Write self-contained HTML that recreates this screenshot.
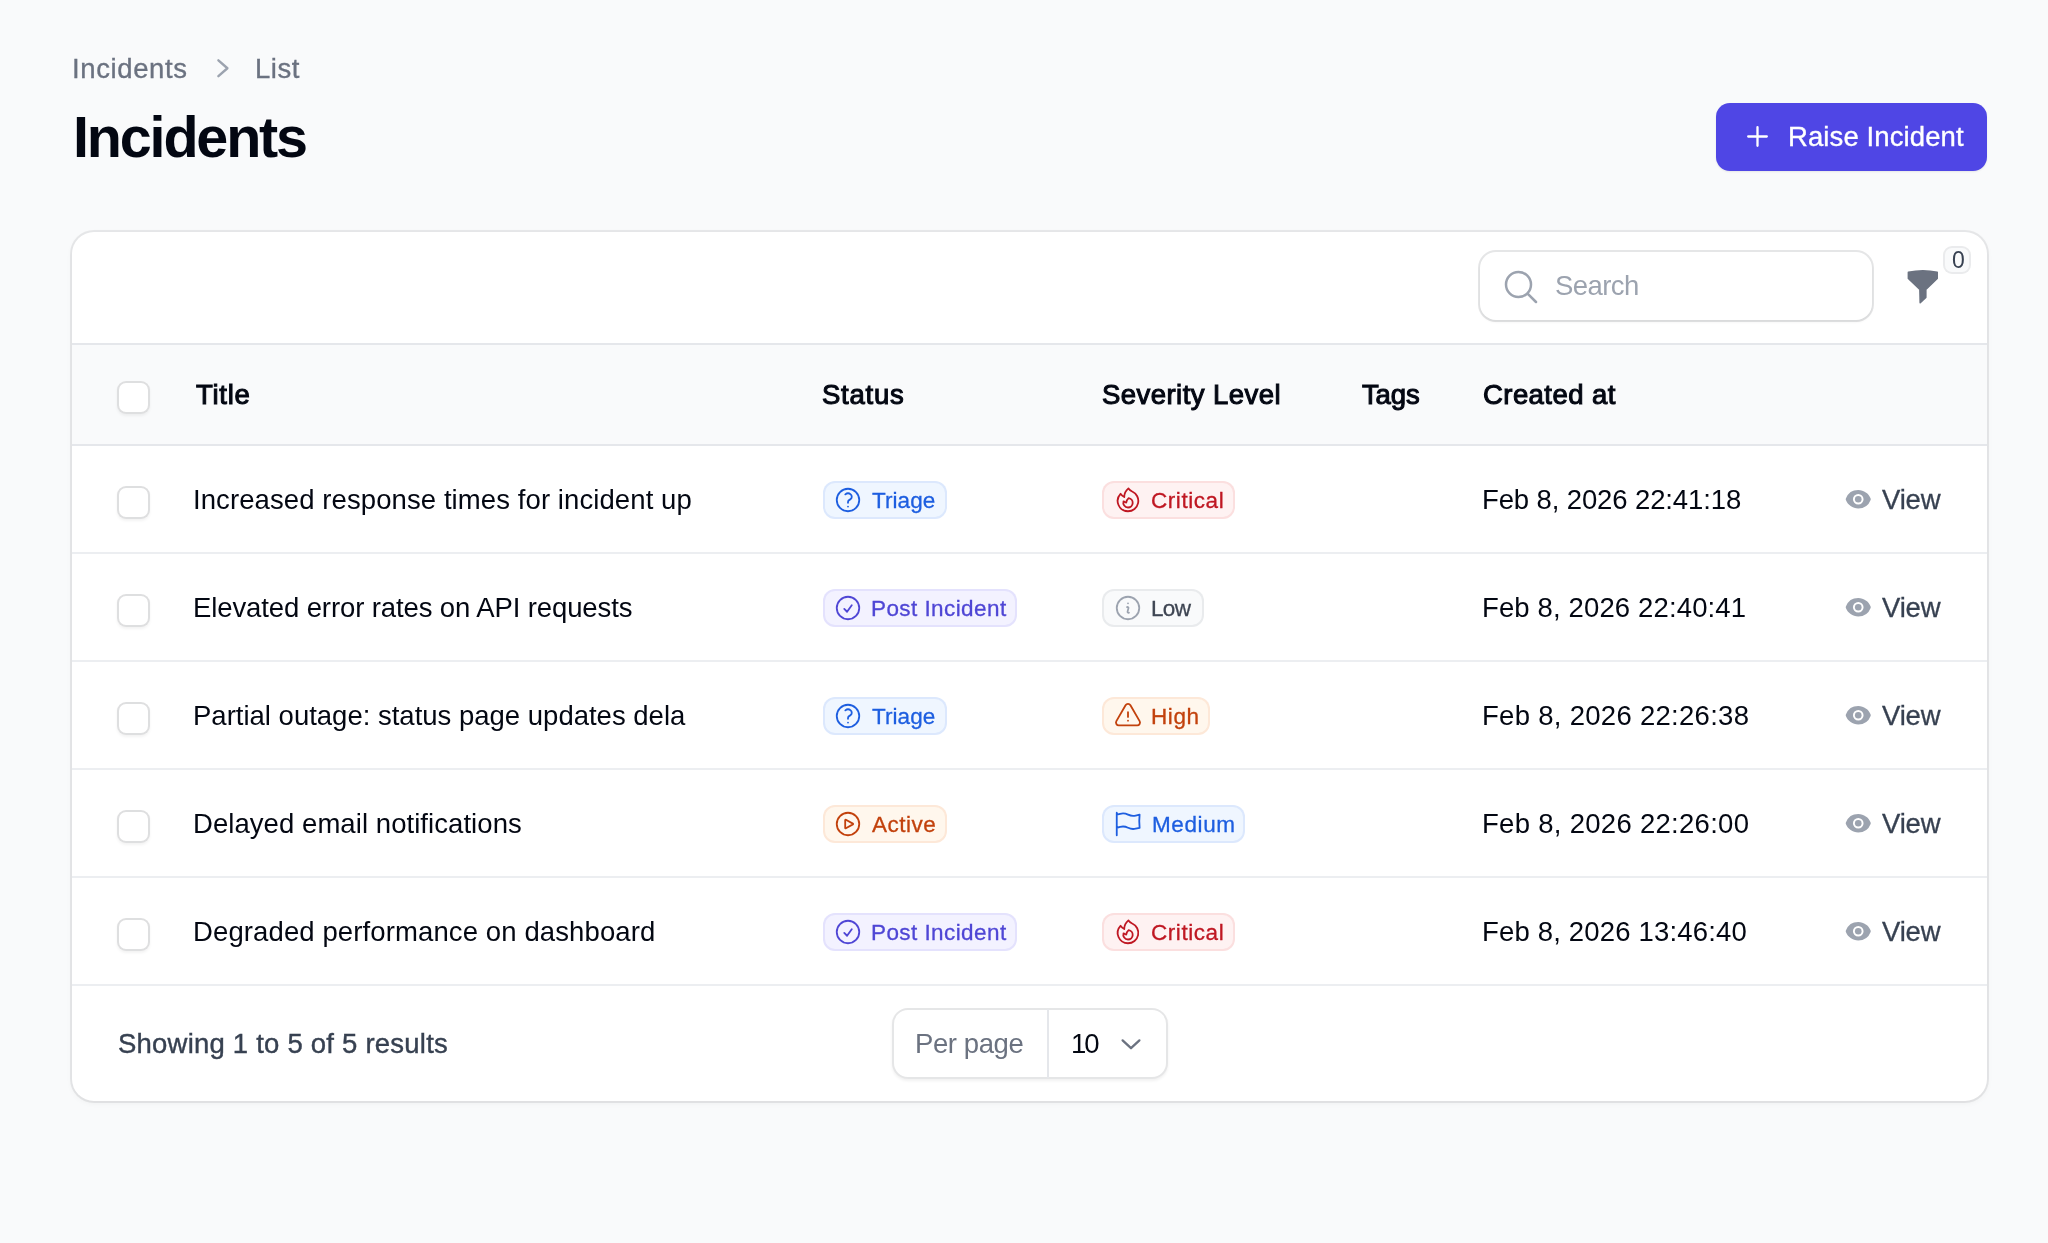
<!DOCTYPE html>
<html><head><meta charset="utf-8"><style>
html,body{margin:0;padding:0;}
body{-webkit-font-smoothing:antialiased;width:2048px;height:1243px;background:#f9fafb;position:relative;overflow:hidden;font-family:"Liberation Sans",sans-serif;}
.t{position:absolute;white-space:nowrap;will-change:transform;}
.card{position:absolute;left:72px;top:232px;width:1915px;height:868.5px;background:#fff;border-radius:22px;box-shadow:0 0 0 2px rgba(3,7,18,0.07),0 2px 6px rgba(0,0,0,0.05);overflow:hidden;}
.thead{position:absolute;left:72px;top:343px;width:1915px;height:103px;background:#f9fafb;border-top:2px solid #e5e7eb;border-bottom:2px solid #e5e7eb;box-sizing:border-box;}
.hl{position:absolute;left:72px;width:1915px;height:2px;background:#eceef1;}
.btn{position:absolute;left:1716px;top:102.5px;width:271px;height:68px;background:#4f46e5;border-radius:14px;box-shadow:0 1px 2px rgba(0,0,0,0.08);}
.search{position:absolute;left:1479.5px;top:252px;width:392.5px;height:68px;background:#fff;border-radius:16px;box-shadow:0 0 0 2px rgba(3,7,18,0.1),0 2px 3px rgba(0,0,0,0.06);}
.fbadge{position:absolute;left:1943px;top:246px;width:28px;height:28px;background:#f9fafb;border-radius:9px;box-shadow:inset 0 0 0 2px rgba(3,7,18,0.06);}
.cb{position:absolute;left:116.5px;width:33px;height:33px;background:#fff;border-radius:9px;box-shadow:inset 0 0 0 2px rgba(3,7,18,0.13),0 2px 3px rgba(0,0,0,0.05);}
.badge{position:absolute;height:38px;border-radius:12px;}
.bi{position:absolute;width:30px;height:30px;}
.eye{position:absolute;left:1845px;width:26.5px;height:26.5px;}
.pp{position:absolute;left:891.5px;top:1007.5px;width:276.5px;height:71.5px;background:#fff;border-radius:16px;box-shadow:inset 0 0 0 2px rgba(3,7,18,0.1),0 2px 3px rgba(0,0,0,0.06);}
.ppdiv{position:absolute;left:1047px;top:1009px;width:2px;height:68.5px;background:#e5e7eb;}
</style></head><body>
<svg style="position:absolute;left:210px;top:56px" width="26" height="26" viewBox="0 0 26 26" fill="none" stroke="#9ca3af" stroke-width="2.4" stroke-linecap="round" stroke-linejoin="round"><path d="M8.4 4.3 17.4 12.25 8.4 20.2"/></svg>
<div class="btn"></div>
<svg style="position:absolute;left:1745px;top:124px" width="25" height="25" viewBox="0 0 25 25" fill="none" stroke="#fff" stroke-width="2.3" stroke-linecap="round"><path d="M12.5 3.2v18.6M3.2 12.5h18.6"/></svg>
<div class="card"></div>
<div class="thead"></div>
<div class="hl" style="top:552px"></div><div class="hl" style="top:660px"></div><div class="hl" style="top:768px"></div><div class="hl" style="top:876px"></div><div class="hl" style="top:984px"></div>
<div class="hl" style="top:984px"></div>
<div class="search"></div>
<svg style="position:absolute;left:1501px;top:267px" width="40" height="40" viewBox="0 0 24 24" fill="none" stroke="#9ca3af" stroke-width="1.5" stroke-linecap="round"><path d="m21 21-5.2-5.2M18 10.5a7.5 7.5 0 1 1-15 0 7.5 7.5 0 0 1 15 0z"/></svg>
<svg style="position:absolute;left:1900px;top:262px" width="48" height="48" viewBox="0 0 48 48" fill="#6b7280" stroke="#6b7280" stroke-width="1.6" stroke-linejoin="round"><path d="M8.4 10.4Q23 7.2 37.2 10.4L37.2 16.4 25.8 27.4 25.8 35.4 20.2 40.6 19.9 27.4 8.4 16.4Z"/></svg>
<div class="fbadge"></div>
<div class="cb" style="top:380.5px"></div><div class="cb" style="top:485.5px"></div><div class="cb" style="top:593.5px"></div><div class="cb" style="top:701.5px"></div><div class="cb" style="top:809.5px"></div><div class="cb" style="top:917.5px"></div>
<div class="badge" style="left:822.5px;top:481px;width:124.1px;background:#eff6ff;box-shadow:inset 0 0 0 2px rgba(37,99,235,0.09)"></div><svg class="bi" style="left:833.4px;top:484.9px;color:#1d5ee0" viewBox="0 0 24 24" fill="none" stroke="currentColor" stroke-width="1.45" stroke-linecap="round" stroke-linejoin="round"><path d="M9.879 7.519c1.171-1.025 3.071-1.025 4.242 0 1.172 1.025 1.172 2.687 0 3.712-.203.179-.43.326-.67.442-.745.361-1.45.999-1.45 1.827v.75M21 12a9 9 0 1 1-18 0 9 9 0 0 1 18 0Zm-9 5.25h.008v.008H12v-.008Z"/></svg><div class="badge" style="left:1102.4px;top:481px;width:132.6px;background:#fef2f2;box-shadow:inset 0 0 0 2px rgba(220,38,38,0.09)"></div><svg class="bi" style="left:1113.3000000000002px;top:484.9px;color:#bf1722" viewBox="0 0 24 24" fill="none" stroke="currentColor" stroke-width="1.45" stroke-linecap="round" stroke-linejoin="round"><path d="M15.362 5.214A8.252 8.252 0 0 1 12 21 8.25 8.25 0 0 1 6.038 7.047 8.287 8.287 0 0 0 9 9.601a8.983 8.983 0 0 1 3.361-6.867 8.21 8.21 0 0 0 3 2.48Z"/><path d="M12 18a3.75 3.75 0 0 0 .495-7.468 5.99 5.99 0 0 0-1.925 3.547 5.975 5.975 0 0 1-2.133-1.001A3.75 3.75 0 0 0 12 18Z"/></svg><div class="badge" style="left:822.5px;top:589px;width:194.5px;background:#f3f2ff;box-shadow:inset 0 0 0 2px rgba(79,70,229,0.09)"></div><svg class="bi" style="left:833.4px;top:592.9px;color:#4f46d5" viewBox="0 0 24 24" fill="none" stroke="currentColor" stroke-width="1.45" stroke-linecap="round" stroke-linejoin="round"><path d="M9 12.75 11.25 15 15 9.75M21 12a9 9 0 1 1-18 0 9 9 0 0 1 18 0Z"/></svg><div class="badge" style="left:1102.4px;top:589px;width:101.3px;background:#f9fafb;box-shadow:inset 0 0 0 2px rgba(75,85,99,0.09)"></div><svg class="bi" style="left:1113.3000000000002px;top:592.9px;color:#9ca3af" viewBox="0 0 24 24" fill="none" stroke="currentColor" stroke-width="1.45" stroke-linecap="round" stroke-linejoin="round"><path d="m11.25 11.25.041-.02a.75.75 0 0 1 1.063.852l-.708 2.836a.75.75 0 0 0 1.063.853l.041-.021M21 12a9 9 0 1 1-18 0 9 9 0 0 1 18 0Zm-9-3.75h.008v.008H12V8.25Z"/></svg><div class="badge" style="left:822.5px;top:697px;width:124.1px;background:#eff6ff;box-shadow:inset 0 0 0 2px rgba(37,99,235,0.09)"></div><svg class="bi" style="left:833.4px;top:700.9px;color:#1d5ee0" viewBox="0 0 24 24" fill="none" stroke="currentColor" stroke-width="1.45" stroke-linecap="round" stroke-linejoin="round"><path d="M9.879 7.519c1.171-1.025 3.071-1.025 4.242 0 1.172 1.025 1.172 2.687 0 3.712-.203.179-.43.326-.67.442-.745.361-1.45.999-1.45 1.827v.75M21 12a9 9 0 1 1-18 0 9 9 0 0 1 18 0Zm-9 5.25h.008v.008H12v-.008Z"/></svg><div class="badge" style="left:1102.4px;top:697px;width:107.6px;background:#fff7ed;box-shadow:inset 0 0 0 2px rgba(234,88,12,0.09)"></div><svg class="bi" style="left:1113.3000000000002px;top:700.9px;color:#c2410c" viewBox="0 0 24 24" fill="none" stroke="currentColor" stroke-width="1.45" stroke-linecap="round" stroke-linejoin="round"><path d="M12 9v3.75m-9.303 3.376c-.866 1.5.217 3.374 1.948 3.374h14.71c1.73 0 2.813-1.874 1.948-3.374L13.949 3.378c-.866-1.5-3.032-1.5-3.898 0L2.697 16.126ZM12 15.75h.007v.008H12v-.008Z"/></svg><div class="badge" style="left:822.5px;top:805px;width:124.0px;background:#fff7ed;box-shadow:inset 0 0 0 2px rgba(234,88,12,0.09)"></div><svg class="bi" style="left:833.4px;top:808.9px;color:#c2410c" viewBox="0 0 24 24" fill="none" stroke="currentColor" stroke-width="1.45" stroke-linecap="round" stroke-linejoin="round"><path d="M21 12a9 9 0 1 1-18 0 9 9 0 0 1 18 0Z"/><path d="M15.91 11.672a.375.375 0 0 1 0 .656l-5.603 3.113a.375.375 0 0 1-.557-.328V8.887c0-.286.307-.466.557-.327l5.603 3.112Z"/></svg><div class="badge" style="left:1102.4px;top:805px;width:143.0px;background:#eff6ff;box-shadow:inset 0 0 0 2px rgba(37,99,235,0.09)"></div><svg class="bi" style="left:1113.3000000000002px;top:808.9px;color:#1d5ee0" viewBox="0 0 24 24" fill="none" stroke="currentColor" stroke-width="1.45" stroke-linecap="round" stroke-linejoin="round"><path d="M3 3v1.5M3 21v-6m0 0 2.77-.693a9 9 0 0 1 6.208.682l.108.054a9 9 0 0 0 6.086.71l3.114-.732a48.524 48.524 0 0 1-.005-10.499l-3.11.732a9 9 0 0 1-6.085-.711l-.108-.054a9 9 0 0 0-6.208-.682L3 4.5M3 15V4.5"/></svg><div class="badge" style="left:822.5px;top:913px;width:194.5px;background:#f3f2ff;box-shadow:inset 0 0 0 2px rgba(79,70,229,0.09)"></div><svg class="bi" style="left:833.4px;top:916.9px;color:#4f46d5" viewBox="0 0 24 24" fill="none" stroke="currentColor" stroke-width="1.45" stroke-linecap="round" stroke-linejoin="round"><path d="M9 12.75 11.25 15 15 9.75M21 12a9 9 0 1 1-18 0 9 9 0 0 1 18 0Z"/></svg><div class="badge" style="left:1102.4px;top:913px;width:132.6px;background:#fef2f2;box-shadow:inset 0 0 0 2px rgba(220,38,38,0.09)"></div><svg class="bi" style="left:1113.3000000000002px;top:916.9px;color:#bf1722" viewBox="0 0 24 24" fill="none" stroke="currentColor" stroke-width="1.45" stroke-linecap="round" stroke-linejoin="round"><path d="M15.362 5.214A8.252 8.252 0 0 1 12 21 8.25 8.25 0 0 1 6.038 7.047 8.287 8.287 0 0 0 9 9.601a8.983 8.983 0 0 1 3.361-6.867 8.21 8.21 0 0 0 3 2.48Z"/><path d="M12 18a3.75 3.75 0 0 0 .495-7.468 5.99 5.99 0 0 0-1.925 3.547 5.975 5.975 0 0 1-2.133-1.001A3.75 3.75 0 0 0 12 18Z"/></svg>
<svg class="eye" style="top:486px" viewBox="0 0 20 20" fill="#9ca3af"><path d="M10 12.5a2.5 2.5 0 1 0 0-5 2.5 2.5 0 0 0 0 5z"/><path fill-rule="evenodd" d="M.66 10.59a1.65 1.65 0 0 1 0-1.19A10 10 0 0 1 10 3c4.26 0 7.89 2.66 9.34 6.41.15.38.15.8 0 1.19A10 10 0 0 1 10 17c-4.26 0-7.89-2.66-9.34-6.41zM14 10a4 4 0 1 1-8 0 4 4 0 0 1 8 0z"/></svg><svg class="eye" style="top:594px" viewBox="0 0 20 20" fill="#9ca3af"><path d="M10 12.5a2.5 2.5 0 1 0 0-5 2.5 2.5 0 0 0 0 5z"/><path fill-rule="evenodd" d="M.66 10.59a1.65 1.65 0 0 1 0-1.19A10 10 0 0 1 10 3c4.26 0 7.89 2.66 9.34 6.41.15.38.15.8 0 1.19A10 10 0 0 1 10 17c-4.26 0-7.89-2.66-9.34-6.41zM14 10a4 4 0 1 1-8 0 4 4 0 0 1 8 0z"/></svg><svg class="eye" style="top:702px" viewBox="0 0 20 20" fill="#9ca3af"><path d="M10 12.5a2.5 2.5 0 1 0 0-5 2.5 2.5 0 0 0 0 5z"/><path fill-rule="evenodd" d="M.66 10.59a1.65 1.65 0 0 1 0-1.19A10 10 0 0 1 10 3c4.26 0 7.89 2.66 9.34 6.41.15.38.15.8 0 1.19A10 10 0 0 1 10 17c-4.26 0-7.89-2.66-9.34-6.41zM14 10a4 4 0 1 1-8 0 4 4 0 0 1 8 0z"/></svg><svg class="eye" style="top:810px" viewBox="0 0 20 20" fill="#9ca3af"><path d="M10 12.5a2.5 2.5 0 1 0 0-5 2.5 2.5 0 0 0 0 5z"/><path fill-rule="evenodd" d="M.66 10.59a1.65 1.65 0 0 1 0-1.19A10 10 0 0 1 10 3c4.26 0 7.89 2.66 9.34 6.41.15.38.15.8 0 1.19A10 10 0 0 1 10 17c-4.26 0-7.89-2.66-9.34-6.41zM14 10a4 4 0 1 1-8 0 4 4 0 0 1 8 0z"/></svg><svg class="eye" style="top:918px" viewBox="0 0 20 20" fill="#9ca3af"><path d="M10 12.5a2.5 2.5 0 1 0 0-5 2.5 2.5 0 0 0 0 5z"/><path fill-rule="evenodd" d="M.66 10.59a1.65 1.65 0 0 1 0-1.19A10 10 0 0 1 10 3c4.26 0 7.89 2.66 9.34 6.41.15.38.15.8 0 1.19A10 10 0 0 1 10 17c-4.26 0-7.89-2.66-9.34-6.41zM14 10a4 4 0 1 1-8 0 4 4 0 0 1 8 0z"/></svg>
<div class="pp"></div>
<div class="ppdiv"></div>
<svg style="position:absolute;left:1117px;top:1030px" width="28" height="28" viewBox="0 0 28 28" fill="none" stroke="#6b7280" stroke-width="2.3" stroke-linecap="round" stroke-linejoin="round"><path d="M5.6 10.4 14 18.2 22.4 10.4"/></svg>
<span class="t" style="left:71.88px;top:54.52px;font-size:27.5px;line-height:27.5px;font-weight:400;color:#6b7280;letter-spacing:0.617px;-webkit-text-stroke:0.35px #6b7280">Incidents</span><span class="t" style="left:255.18px;top:54.52px;font-size:27.5px;line-height:27.5px;font-weight:400;color:#6b7280;letter-spacing:0.499px;-webkit-text-stroke:0.35px #6b7280">List</span><span class="t" style="left:72.50px;top:108.83px;font-size:57.5px;line-height:57.5px;font-weight:700;color:#030712;letter-spacing:-2.166px">Incidents</span><span class="t" style="left:1787.58px;top:122.82px;font-size:27.5px;line-height:27.5px;font-weight:400;color:#ffffff;letter-spacing:0.102px;-webkit-text-stroke:0.35px #ffffff">Raise Incident</span><span class="t" style="left:1555.00px;top:272.22px;font-size:27.5px;line-height:27.5px;font-weight:400;color:#9ca3af;letter-spacing:-0.568px">Search</span><span class="t" style="left:1951.50px;top:249.33px;font-size:23px;line-height:23px;font-weight:400;color:#374151;letter-spacing:0.000px">0</span><span class="t" style="left:195.72px;top:380.62px;font-size:27.5px;line-height:27.5px;font-weight:400;color:#030712;letter-spacing:0.703px;-webkit-text-stroke:1.05px #030712">Title</span><span class="t" style="left:822.32px;top:380.62px;font-size:27.5px;line-height:27.5px;font-weight:400;color:#030712;letter-spacing:0.748px;-webkit-text-stroke:1.05px #030712">Status</span><span class="t" style="left:1101.53px;top:380.62px;font-size:27.5px;line-height:27.5px;font-weight:400;color:#030712;letter-spacing:0.449px;-webkit-text-stroke:1.05px #030712">Severity Level</span><span class="t" style="left:1361.53px;top:380.62px;font-size:27.5px;line-height:27.5px;font-weight:400;color:#030712;letter-spacing:-0.129px;-webkit-text-stroke:1.05px #030712">Tags</span><span class="t" style="left:1482.53px;top:380.62px;font-size:27.5px;line-height:27.5px;font-weight:400;color:#030712;letter-spacing:0.431px;-webkit-text-stroke:1.05px #030712">Created at</span><span class="t" style="left:193.00px;top:485.52px;font-size:27.5px;line-height:27.5px;font-weight:400;color:#030712;letter-spacing:0.090px">Increased response times for incident up</span><span class="t" style="left:1481.60px;top:485.52px;font-size:27.5px;line-height:27.5px;font-weight:400;color:#030712;letter-spacing:-0.120px">Feb 8, 2026 22:41:18</span><span class="t" style="left:1882.15px;top:485.52px;font-size:27.5px;line-height:27.5px;font-weight:400;color:#374151;letter-spacing:-0.183px;-webkit-text-stroke:0.3px #374151">View</span><span class="t" style="left:193.00px;top:593.52px;font-size:27.5px;line-height:27.5px;font-weight:400;color:#030712;letter-spacing:-0.110px">Elevated error rates on API requests</span><span class="t" style="left:1481.60px;top:593.52px;font-size:27.5px;line-height:27.5px;font-weight:400;color:#030712;letter-spacing:0.138px">Feb 8, 2026 22:40:41</span><span class="t" style="left:1882.15px;top:593.52px;font-size:27.5px;line-height:27.5px;font-weight:400;color:#374151;letter-spacing:-0.183px;-webkit-text-stroke:0.3px #374151">View</span><span class="t" style="left:193.00px;top:701.52px;font-size:27.5px;line-height:27.5px;font-weight:400;color:#030712;letter-spacing:-0.000px">Partial outage: status page updates dela</span><span class="t" style="left:1481.60px;top:701.52px;font-size:27.5px;line-height:27.5px;font-weight:400;color:#030712;letter-spacing:0.291px">Feb 8, 2026 22:26:38</span><span class="t" style="left:1882.15px;top:701.52px;font-size:27.5px;line-height:27.5px;font-weight:400;color:#374151;letter-spacing:-0.183px;-webkit-text-stroke:0.3px #374151">View</span><span class="t" style="left:193.00px;top:809.52px;font-size:27.5px;line-height:27.5px;font-weight:400;color:#030712;letter-spacing:0.063px">Delayed email notifications</span><span class="t" style="left:1481.60px;top:809.52px;font-size:27.5px;line-height:27.5px;font-weight:400;color:#030712;letter-spacing:0.291px">Feb 8, 2026 22:26:00</span><span class="t" style="left:1882.15px;top:809.52px;font-size:27.5px;line-height:27.5px;font-weight:400;color:#374151;letter-spacing:-0.183px;-webkit-text-stroke:0.3px #374151">View</span><span class="t" style="left:193.00px;top:917.52px;font-size:27.5px;line-height:27.5px;font-weight:400;color:#030712;letter-spacing:0.114px">Degraded performance on dashboard</span><span class="t" style="left:1481.60px;top:917.52px;font-size:27.5px;line-height:27.5px;font-weight:400;color:#030712;letter-spacing:0.180px">Feb 8, 2026 13:46:40</span><span class="t" style="left:1882.15px;top:917.52px;font-size:27.5px;line-height:27.5px;font-weight:400;color:#374151;letter-spacing:-0.183px;-webkit-text-stroke:0.3px #374151">View</span><span class="t" style="left:872.15px;top:489.85px;font-size:22.5px;line-height:22.5px;font-weight:400;color:#1d5ee0;letter-spacing:0.055px;-webkit-text-stroke:0.3px #1d5ee0">Triage</span><span class="t" style="left:1151.15px;top:489.85px;font-size:22.5px;line-height:22.5px;font-weight:400;color:#bf1722;letter-spacing:0.564px;-webkit-text-stroke:0.3px #bf1722">Critical</span><span class="t" style="left:870.75px;top:597.85px;font-size:22.5px;line-height:22.5px;font-weight:400;color:#4f46d5;letter-spacing:0.423px;-webkit-text-stroke:0.3px #4f46d5">Post Incident</span><span class="t" style="left:1151.15px;top:597.85px;font-size:22.5px;line-height:22.5px;font-weight:400;color:#3f4653;letter-spacing:-0.663px;-webkit-text-stroke:0.3px #3f4653">Low</span><span class="t" style="left:872.15px;top:705.85px;font-size:22.5px;line-height:22.5px;font-weight:400;color:#1d5ee0;letter-spacing:0.055px;-webkit-text-stroke:0.3px #1d5ee0">Triage</span><span class="t" style="left:1151.15px;top:705.85px;font-size:22.5px;line-height:22.5px;font-weight:400;color:#c2410c;letter-spacing:0.580px;-webkit-text-stroke:0.3px #c2410c">High</span><span class="t" style="left:872.15px;top:813.85px;font-size:22.5px;line-height:22.5px;font-weight:400;color:#c2410c;letter-spacing:0.489px;-webkit-text-stroke:0.3px #c2410c">Active</span><span class="t" style="left:1151.55px;top:813.85px;font-size:22.5px;line-height:22.5px;font-weight:400;color:#1d5ee0;letter-spacing:0.604px;-webkit-text-stroke:0.3px #1d5ee0">Medium</span><span class="t" style="left:870.75px;top:921.85px;font-size:22.5px;line-height:22.5px;font-weight:400;color:#4f46d5;letter-spacing:0.423px;-webkit-text-stroke:0.3px #4f46d5">Post Incident</span><span class="t" style="left:1151.15px;top:921.85px;font-size:22.5px;line-height:22.5px;font-weight:400;color:#bf1722;letter-spacing:0.564px;-webkit-text-stroke:0.3px #bf1722">Critical</span><span class="t" style="left:117.80px;top:1030.12px;font-size:27.5px;line-height:27.5px;font-weight:400;color:#374151;letter-spacing:0.218px;-webkit-text-stroke:0.4px #374151">Showing 1 to 5 of 5 results</span><span class="t" style="left:915.40px;top:1030.22px;font-size:27.5px;line-height:27.5px;font-weight:400;color:#6b7280;letter-spacing:-0.417px">Per page</span><span class="t" style="left:1071.40px;top:1030.22px;font-size:27.5px;line-height:27.5px;font-weight:400;color:#030712;letter-spacing:-1.994px">10</span>
</body></html>
